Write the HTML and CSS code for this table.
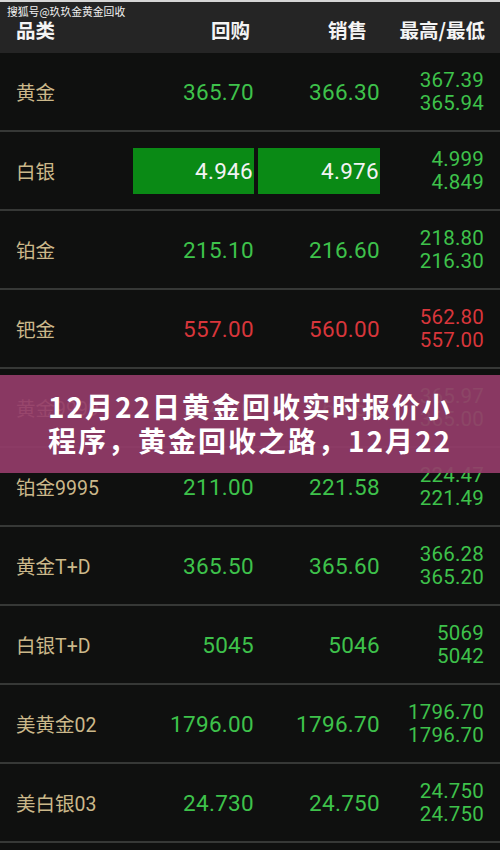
FILE: index.html
```html
<!DOCTYPE html>
<html lang="zh-CN">
<head>
<meta charset="utf-8">
<title>黄金回收实时报价</title>
<link rel="stylesheet" href="styles.css">
</head>
<body>
<div class="screen">
  <div class="header">
    <div class="watermark">搜狐号@玖玖金黄金回收</div>
    <div class="grid head-row">
      <div class="h h-name">品类</div>
      <div class="h h-buy">回购</div>
      <div class="h h-sell">销售</div>
      <div class="h h-hl">最高/最低</div>
    </div>
  </div>

  <div class="list">
    <div class="grid row">
      <div class="name">黄金</div>
      <div class="num up"><span class="val">365.70</span></div>
      <div class="num up"><span class="val">366.30</span></div>
      <div class="hl up"><span>367.39</span><span>365.94</span></div>
    </div>
    <div class="grid row">
      <div class="name">白银</div>
      <div class="num"><span class="val box">4.946</span></div>
      <div class="num"><span class="val box">4.976</span></div>
      <div class="hl up"><span>4.999</span><span>4.849</span></div>
    </div>
    <div class="grid row">
      <div class="name">铂金</div>
      <div class="num up"><span class="val">215.10</span></div>
      <div class="num up"><span class="val">216.60</span></div>
      <div class="hl up"><span>218.80</span><span>216.30</span></div>
    </div>
    <div class="grid row">
      <div class="name">钯金</div>
      <div class="num down"><span class="val">557.00</span></div>
      <div class="num down"><span class="val">560.00</span></div>
      <div class="hl down"><span>562.80</span><span>557.00</span></div>
    </div>
    <div class="grid row">
      <div class="name">黄金9999</div>
      <div class="num up"><span class="val">364.90</span></div>
      <div class="num up"><span class="val">365.50</span></div>
      <div class="hl up"><span>365.97</span><span>365.00</span></div>
    </div>
    <div class="grid row">
      <div class="name">铂金9995</div>
      <div class="num up"><span class="val">211.00</span></div>
      <div class="num up"><span class="val">221.58</span></div>
      <div class="hl up"><span>224.47</span><span>221.49</span></div>
    </div>
    <div class="grid row">
      <div class="name">黄金T+D</div>
      <div class="num up"><span class="val">365.50</span></div>
      <div class="num up"><span class="val">365.60</span></div>
      <div class="hl up"><span>366.28</span><span>365.20</span></div>
    </div>
    <div class="grid row">
      <div class="name">白银T+D</div>
      <div class="num up"><span class="val">5045</span></div>
      <div class="num up"><span class="val">5046</span></div>
      <div class="hl up"><span>5069</span><span>5042</span></div>
    </div>
    <div class="grid row">
      <div class="name">美黄金02</div>
      <div class="num up"><span class="val">1796.00</span></div>
      <div class="num up"><span class="val">1796.70</span></div>
      <div class="hl up"><span>1796.70</span><span>1796.70</span></div>
    </div>
    <div class="grid row">
      <div class="name">美白银03</div>
      <div class="num up"><span class="val">24.730</span></div>
      <div class="num up"><span class="val">24.750</span></div>
      <div class="hl up"><span>24.750</span><span>24.750</span></div>
    </div>
  </div>

  <div class="banner">
    <span class="line">12月22日黄金回收实时报价小</span>
    <span class="line">程序，黄金回收之路，12月22</span>
  </div>
</div>
</body>
</html>
```

FILE: styles.css
```css
* { box-sizing: border-box; }

html, body {
  margin: 0;
  padding: 0;
  background: #0f100f;
}

body {
  font-family: Roboto, "Noto Sans CJK SC", "Noto Sans", sans-serif;
  width: 500px;
  height: 850px;
  overflow: hidden;
}

.screen {
  position: relative;
  width: 500px;
  height: 850px;
  background: #0f100f;
}

.header {
  position: relative;
  height: 53px;
  background: #252525;
  border-top: 2px solid #d6d6d6;
}

.watermark {
  position: absolute;
  left: 7px;
  top: 2px;
  font-family: "Noto Sans CJK SC", sans-serif;
  font-size: 10.8px;
  line-height: 14px;
  color: #f2f2f2;
}

.grid {
  display: grid;
  grid-template-columns: 113px 121px 122px 1fr;
  column-gap: 4px;
  padding: 0 15px 0 16px;
}

.head-row {
  height: 51px;
  align-items: center;
  padding-top: 4px;
}

.h {
  font-family: "Noto Sans CJK SC", sans-serif;
  font-weight: 700;
  font-size: 19.5px;
  color: #f4f4f4;
  white-space: nowrap;
}

.h-name { text-align: left; }
.h-buy { text-align: right; padding-right: 4px; }
.h-sell { text-align: right; padding-right: 13px; }
.h-hl { text-align: right; }

.row {
  height: 79px;
  border-bottom: 2px solid #363836;
  align-items: center;
}

.name {
  font-family: Roboto, "Noto Sans CJK SC", sans-serif;
  font-size: 19.5px;
  color: #cbb88a;
  white-space: nowrap;
}

.num {
  display: flex;
  justify-content: flex-end;
  align-items: center;
  height: 100%;
}

.val {
  font-size: 22.5px;
  letter-spacing: 0.3px;
}

.box {
  display: flex;
  align-items: center;
  justify-content: flex-end;
  width: 100%;
  height: 46px;
  background: #0a8a15;
  color: #f3f3f3;
  padding-right: 1px;
}

.hl {
  display: flex;
  flex-direction: column;
  align-items: flex-end;
  font-size: 20.5px;
  line-height: 23px;
  letter-spacing: 0.2px;
  padding-right: 1px;
}

.up { color: #3ec24b; }
.down { color: #d8363b; }

.banner {
  position: absolute;
  left: 0;
  top: 375px;
  width: 500px;
  height: 98px;
  background: rgba(148, 60, 105, 0.92);
  display: flex;
  flex-direction: column;
  align-items: center;
  justify-content: center;
  padding-bottom: 2px;
}

.banner .line {
  display: block;
  font-family: "Noto Sans CJK SC", sans-serif;
  font-weight: 700;
  font-size: 28px;
  line-height: 34px;
  letter-spacing: 2px;
  color: #ffffff;
  white-space: nowrap;
}
```
